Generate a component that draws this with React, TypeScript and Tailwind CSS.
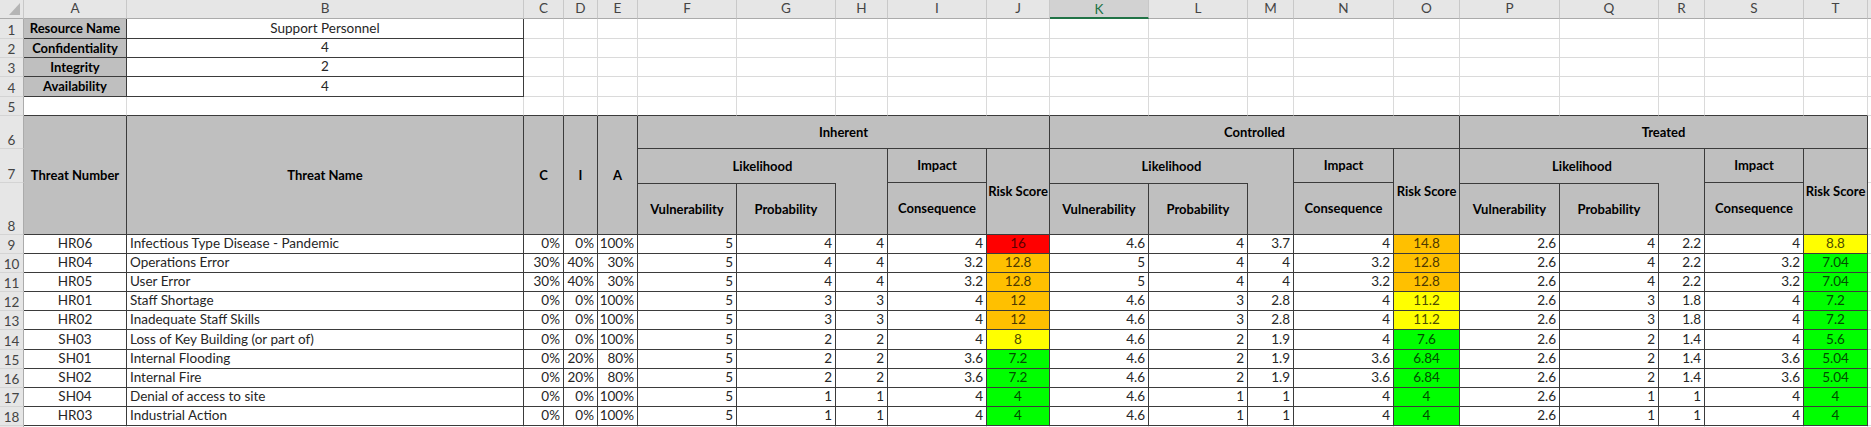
import React from "react";

const LETTERS = ["A", "B", "C", "D", "E", "F", "G", "H", "I", "J", "K", "L", "M", "N", "O", "P", "Q", "R", "S", "T", ""];

type Row = {
  id: string;
  name: string;
  cia: string[];
  inh: number[];
  ctl: number[];
  trt: number[];
};

const rows: Row[] = [
  { id: "HR06", name: "Infectious Type Disease - Pandemic", cia: ["0%", "0%", "100%"], inh: [5, 4, 4, 4, 16], ctl: [4.6, 4, 3.7, 4, 14.8], trt: [2.6, 4, 2.2, 4, 8.8] },
  { id: "HR04", name: "Operations Error", cia: ["30%", "40%", "30%"], inh: [5, 4, 4, 3.2, 12.8], ctl: [5, 4, 4, 3.2, 12.8], trt: [2.6, 4, 2.2, 3.2, 7.04] },
  { id: "HR05", name: "User Error", cia: ["30%", "40%", "30%"], inh: [5, 4, 4, 3.2, 12.8], ctl: [5, 4, 4, 3.2, 12.8], trt: [2.6, 4, 2.2, 3.2, 7.04] },
  { id: "HR01", name: "Staff Shortage", cia: ["0%", "0%", "100%"], inh: [5, 3, 3, 4, 12], ctl: [4.6, 3, 2.8, 4, 11.2], trt: [2.6, 3, 1.8, 4, 7.2] },
  { id: "HR02", name: "Inadequate Staff Skills", cia: ["0%", "0%", "100%"], inh: [5, 3, 3, 4, 12], ctl: [4.6, 3, 2.8, 4, 11.2], trt: [2.6, 3, 1.8, 4, 7.2] },
  { id: "SH03", name: "Loss of Key Building (or part of)", cia: ["0%", "0%", "100%"], inh: [5, 2, 2, 4, 8], ctl: [4.6, 2, 1.9, 4, 7.6], trt: [2.6, 2, 1.4, 4, 5.6] },
  { id: "SH01", name: "Internal Flooding", cia: ["0%", "20%", "80%"], inh: [5, 2, 2, 3.6, 7.2], ctl: [4.6, 2, 1.9, 3.6, 6.84], trt: [2.6, 2, 1.4, 3.6, 5.04] },
  { id: "SH02", name: "Internal Fire", cia: ["0%", "20%", "80%"], inh: [5, 2, 2, 3.6, 7.2], ctl: [4.6, 2, 1.9, 3.6, 6.84], trt: [2.6, 2, 1.4, 3.6, 5.04] },
  { id: "SH04", name: "Denial of access to site", cia: ["0%", "0%", "100%"], inh: [5, 1, 1, 4, 4], ctl: [4.6, 1, 1, 4, 4], trt: [2.6, 1, 1, 4, 4] },
  { id: "HR03", name: "Industrial Action", cia: ["0%", "0%", "100%"], inh: [5, 1, 1, 4, 4], ctl: [4.6, 1, 1, 4, 4], trt: [2.6, 1, 1, 4, 4] },
];

// risk colour bands as in the sheet's conditional formatting
const riskClass = (v: number) =>
  v >= 15
    ? "bg-[#ff0000] text-[#5c0000]"
    : v >= 12
    ? "bg-[#ffc000] text-[#4d3900]"
    : v >= 8
    ? "bg-[#ffff00] text-[#4d4d00]"
    : "bg-[#00ff00] text-[#004d00]";

const Cell = ({ className = "", children }: { className?: string; children?: React.ReactNode }) => (
  <div className={"flex min-w-0 items-center overflow-hidden whitespace-nowrap border-r border-b px-[3px] " + className}>
    {children}
  </div>
);

const dark = "border-[#3b3b3b]";
const grid = "border-[#dadada]";
const head = "bg-[#bfbfbf] font-bold text-[13px] text-black justify-center text-center " + dark;
const num = "justify-end text-[#262626] " + dark;

const RowNum = ({ n }: { n?: number }) => (
  <div className="flex items-end justify-center border-r border-b border-r-[#ababab] border-b-[#d4d4d4] bg-[#e6e6e6] pb-px text-[#444]">
    {n}
  </div>
);

const Blank = ({ n, className = "" }: { n: number; className?: string }) => (
  <>
    {Array.from({ length: n }).map((_, i) => (
      <Cell key={i} className={grid + " " + className} />
    ))}
  </>
);

const Group = ({ title }: { title: string }) => (
  <Cell className={"col-span-5 " + head}>{title}</Cell>
);

const SubHeads = () => (
  <>
    <Cell className={"col-span-3 border-b-0 " + head}>Likelihood</Cell>
    <Cell className={head}>Impact</Cell>
    <Cell className={"row-span-2 " + head}>Risk Score</Cell>
  </>
);

const LeafHeads = () => (
  <>
    <Cell className={"border-t " + head}>Vulnerability</Cell>
    <Cell className={"border-t " + head}>Probability</Cell>
    <Cell className={head} />
    <Cell className={head}>Consequence</Cell>
  </>
);

const Scores = ({ vals }: { vals: number[] }) => (
  <>
    {vals.slice(0, 4).map((v, i) => (
      <Cell key={i} className={num}>
        {v}
      </Cell>
    ))}
    <Cell className={"justify-center " + dark + " " + riskClass(vals[4])}>{vals[4]}</Cell>
  </>
);

export default function App() {
  return (
    <div className="h-[427px] w-[1871px] overflow-hidden bg-white font-[Lato,sans-serif] text-[13.5px] leading-none">
      <div className="grid grid-cols-[24px_103px_397px_40px_34px_40px_99px_99px_52px_99px_63px_99px_99px_46px_100px_66px_100px_99px_46px_99px_64px_1fr] grid-rows-[19px_20px_19px_19px_20px_19px_33px_34px_52px_19px_19px_19px_19px_19px_20px_19px_19px_19px_19px_19px]">
        {/* column letters */}
        <div className="relative border-r border-b border-r-[#c8c8c8] border-b-[#ababab] bg-[#e6e6e6]">
          <svg className="absolute right-[3px] bottom-[3px]" width="11" height="12" viewBox="0 0 11 12">
            <polygon points="11,0 11,12 0,12" fill="#b5b5b5" />
          </svg>
        </div>
        {LETTERS.map((l) =>
          l === "K" ? (
            <div key={l} className="flex items-center justify-center border-r border-b-2 border-r-[#c8c8c8] border-b-[#217346] bg-[#d2d2d2] pt-[2px] text-[#217346]">
              {l}
            </div>
          ) : (
            <div key={l || "U"} className="flex items-center justify-center border-r border-b border-r-[#c8c8c8] border-b-[#ababab] bg-[#e6e6e6] text-[#444]">
              {l}
            </div>
          )
        )}

        {/* resource block */}
        {[
          ["Resource Name", "Support Personnel"],
          ["Confidentiality", "4"],
          ["Integrity", "2"],
          ["Availability", "4"],
        ].map(([k, v], i) => (
          <React.Fragment key={k}>
            <RowNum n={i + 1} />
            <Cell className={head}>{k}</Cell>
            <Cell className={"justify-center text-[#262626] " + dark}>{v}</Cell>
            <Blank n={19} />
          </React.Fragment>
        ))}

        <RowNum n={5} />
        <Cell className={"border-b-[#3b3b3b] " + grid} />
        <Cell className={"border-b-[#3b3b3b] " + grid} />
        <Blank n={18} className="border-b-[#3b3b3b]" />
        <Cell className={grid} />

        {/* table header */}
        <RowNum n={6} />
        <Cell className={"row-span-3 " + head}>Threat Number</Cell>
        <Cell className={"row-span-3 " + head}>Threat Name</Cell>
        <Cell className={"row-span-3 " + head}>C</Cell>
        <Cell className={"row-span-3 " + head}>I</Cell>
        <Cell className={"row-span-3 " + head}>A</Cell>
        <Group title="Inherent" />
        <Group title="Controlled" />
        <Group title="Treated" />
        <Cell className={grid} />

        <RowNum n={7} />
        <SubHeads />
        <SubHeads />
        <SubHeads />
        <Cell className={grid} />

        <RowNum n={8} />
        <LeafHeads />
        <LeafHeads />
        <LeafHeads />
        <Cell className={grid} />

        {/* threats */}
        {rows.map((r, i) => (
          <React.Fragment key={r.id}>
            <RowNum n={i + 9} />
            <Cell className={"justify-center text-[#262626] " + dark}>{r.id}</Cell>
            <Cell className={"text-[#262626] " + dark}>{r.name}</Cell>
            {r.cia.map((c, j) => (
              <Cell key={j} className={num}>
                {c}
              </Cell>
            ))}
            <Scores vals={r.inh} />
            <Scores vals={r.ctl} />
            <Scores vals={r.trt} />
            <Cell className={grid} />
          </React.Fragment>
        ))}

        {/* row 19, only its top edge shows */}
        <RowNum />
        <Blank n={21} />
      </div>
    </div>
  );
}
